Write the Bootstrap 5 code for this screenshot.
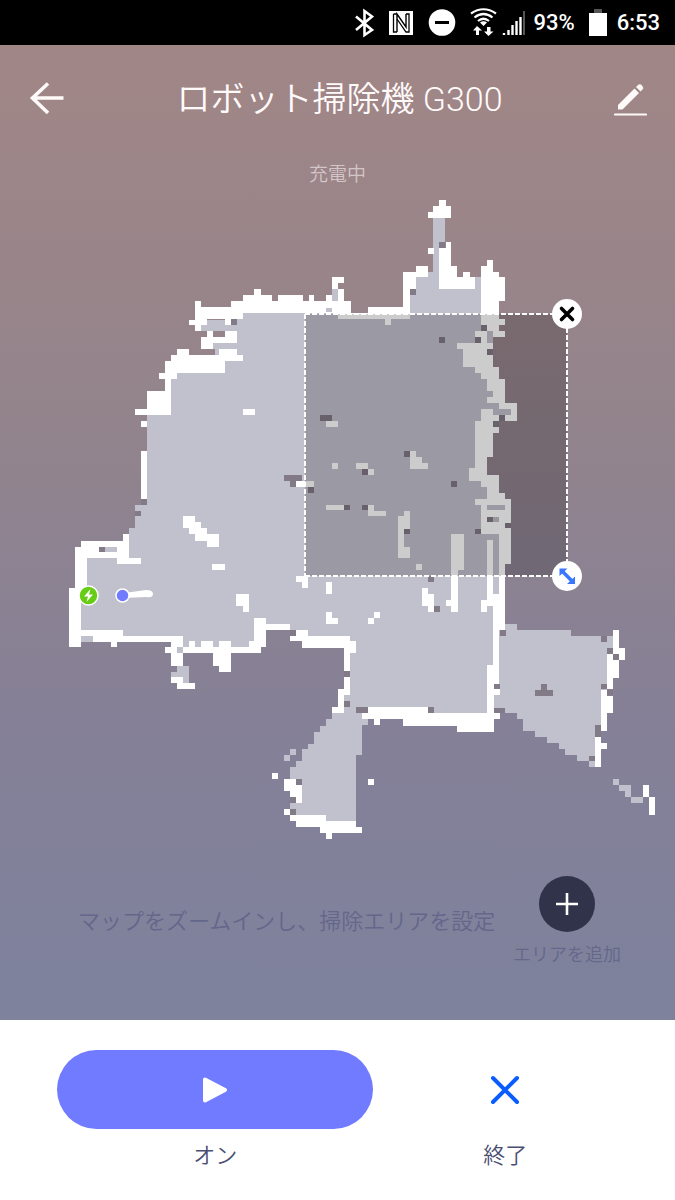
<!DOCTYPE html>
<html lang="ja">
<head>
<meta charset="utf-8">
<meta name="viewport" content="width=device-width, initial-scale=1">
<title>ロボット掃除機 G300</title>
<link href="https://cdn.jsdelivr.net/npm/bootstrap@5.3.0/dist/css/bootstrap.min.css" rel="stylesheet">
<style>
body{font-family:Roboto,"Noto Sans CJK JP",sans-serif;background:#fff;min-height:100vh}
svg{display:block;flex:none}
.statusbar{height:45px;padding-right:15px;background:#000;color:#fff;font-size:22px;font-weight:500;line-height:24px}
.statusbar .level{margin:0 14px 0 8px}
.statusbar .clock{margin-left:10px}
.screen{background:linear-gradient(#a18686,#93848c 38%,#848098 72%,#7e829d)}
.topbar{height:108px;padding:0 28px}
.topbar h1{font-size:34px;line-height:48px;color:#fffafa;font-weight:350}
.icon-btn{border:0;background:none;padding:0;color:#fffafa}
.state{font-size:19px;line-height:28px;padding:8px 0 6px;color:#d3c5c8;font-weight:350}
.floor{fill:#c1c0cd}
.wall{fill:#fff}
.gap{fill:#827a86}
.handle{position:absolute;width:30px;height:30px;border:0;border-radius:50%;background:#fff;padding:0;transform:translate(-50%,-50%)}
.handle-close{left:84%;top:18.4%}
.handle-size{left:84%;top:59.1%}
.tools{padding:36px 54px 53px 78px}
.hint{font-size:22px;line-height:28px;color:#64668a;font-weight:350}
.add{font-size:18px;line-height:24px;color:#64668a;font-weight:350;gap:11px;border:0;background:none;padding:0}
.add-disc{width:56px;height:56px;border-radius:50%;background:#303349}
.actions{padding:30px 38px 30px 57px;color:#494e72;font-size:22px;line-height:28px;font-weight:350}
.play-cell{flex:6 1 0}
.end-cell{flex:5 1 0}
.play,.end{height:79px;border:0;padding:0}
.play{border-radius:40px;background:#707bff}
.end{background:none}
.actions label{margin-top:13px}
</style>
</head>
<body class="d-flex flex-column">
<div class="statusbar d-flex align-items-center justify-content-end">
  <svg width="170" height="45" viewBox="356 0 170 45" role="img" aria-label="Bluetooth, NFC, Wi-Fi">
    <path d="M357 16.500L373 30L365.500 35V11L373 16.500L357 30" fill="none" stroke="#fff" stroke-width="2.600"/>
    <rect x="390" y="11" width="24" height="24" fill="#fff"/>
    <path d="M398 32V14L407 27V14" fill="none" stroke="#000" stroke-width="1.400"/>
    <path d="M394.500 14V32H398M394.500 14H398M407 14H410V32H407L398 19" fill="none" stroke="#000" stroke-width="1.300"/>
    <circle cx="443" cy="22.500" r="13.300" fill="#fff"/><path d="M436 22.500h14" stroke="#000" stroke-width="3"/>
    <g fill="none" stroke="#fff" stroke-width="2.200"><path d="M472 13.500Q484.500 5 497 13.500M475.500 17.500Q484.500 10.500 493.500 17.500M479 21Q484.500 16.500 490 21"/></g>
    <path d="M481 22.500Q484.500 20 488 22.500L484.500 26ZM478 26L483 30.500H480V35H477V30.500H474ZM489.500 36L494.500 31.500H491.500V27H488V31.500H485Z" fill="#fff"/>
    <path d="M505 35v-2M509.500 35v-5M513.500 35v-10M517.500 35v-14M521.500 35v-18" stroke="#fff" stroke-width="2.400"/><path d="M525 35V11" stroke="#555" stroke-width="2"/>
  </svg>
  <span class="level">93%</span>
  <svg width="18" height="27" viewBox="0 0 18 27" role="img" aria-label="battery"><path d="M5 0h8v4h-8z" fill="#555"/><path d="M0 4h18v23H0z" fill="#fff"/></svg>
  <span class="clock">6:53</span>
</div>

<main class="screen">
  <header class="topbar d-flex align-items-center justify-content-between">
    <button class="icon-btn" type="button" aria-label="戻る"><svg width="38" height="38" viewBox="0 0 38 38"><path d="M20 3.500L4.500 18L20 33M4.500 18H35.500" fill="none" stroke="currentColor" stroke-width="3.600"/></svg></button>
    <h1 class="m-0">ロボット掃除機 G300</h1>
    <button class="icon-btn" type="button" aria-label="編集"><svg width="34" height="34" viewBox="0 0 34 34"><path d="M2 32.500H33" stroke="currentColor" stroke-width="2.200" stroke-linecap="round"/><path d="M5 27.500V23L21.500 6.500L26 11L9.500 27.500ZM23 5L25 3Q27 1.500 29 3.500T29.500 7.500L27.500 9.500Z" fill="currentColor"/></svg></button>
  </header>
  <div class="state text-center">充電中</div>

  <div class="position-relative">
    <svg class="w-100 h-auto" viewBox="0 195 675 645" role="img" aria-label="間取りマップ">
      <g shape-rendering="crispEdges">
        <!-- rooms -->
        <g class="floor">
          <path d="M237 313H410V277H427V272H433V218H445V277H481V331H493V403H499V409H493V440H487V475H497V500H499V713H350V642H302V636H290V627H258V647H180V640H78V555H126V534H129V528H135V505H147V413H169V373H215V343H237Z"/>
          <path transform="translate(130 260) scale(.33333)" d="M213 196H320V213H213ZM231 180H284V196H231ZM248 250H320V268H248Z"/>
          <path transform="translate(60 440) scale(.33333)" d="M351 677H386V730H368V712H333V695H351Z"/>
          <path transform="translate(290 380) scale(.33333)" d="M592 70H628V88H664V104H610V88H592Z"/>
          <path transform="translate(250 600) scale(.33333)" d="M300 286H318V322H336V358H354V376H336V466H318V663H138V645H120V502H138V484H157V448H175V432H193V395H211V377H229V358H247V340H282V286ZM120 448h18v18h-18zM103 466h18v18h-18z"/>
          <path transform="translate(460 560) scale(.33333)" d="M118 192H171V210H333V228H458V264H441V496H405V620H387V604H351V586H315V568H298V550H262V532H226V514H190V478H171V460H136V444H100V210H118ZM458 658h18v17h-18zM476 675H512V711H495V693H476ZM512 712h36v17h-36z"/>
        </g>
        <!-- walls and obstacles -->
        <g class="wall">
          <path transform="translate(130 260) scale(.33333)" d="M195 124H213V142H302V124H338V106H373V88H392V106H427V124H445V106H518V124H536V106H553V124H589V106H607V52H642V70H625V88H642V124H662V160H338V178H302V196H284V178H231V196H213V213H195V196H177V180H195ZM231 213H248V231H284V213H320V250H248V268H213V231H231ZM142 268H177V286H266V268H320V286H338V304H284V340H142V357H124V464H16V448H52V393H106V357H88V340H106V304H124V286H142ZM34 482h18v18h-18zM338 448h36v17h-36z"/>
          <path transform="translate(380 190) scale(.33333)" d="M-36 352H70V247H107V227H143V262H107V298H90V388H-126V370H-36ZM16 388h18v18h-18zM178 30H197V48H214V84H143V66H160V48H178ZM143 174h18v17h-18zM197 156H214V227H232V262H250V245H270V262H286V298H178V174H197ZM322 209H340V245H358V262H376V334H358V388H376V406H358V424H376V442H340V424H322V406H304V227H322ZM286 424H322V460H340V478H322V496H340V532H358V568H376V640H322V568H304V550H286V532H250V478H232V460H304V442H286Z"/>
          <path transform="translate(290 380) scale(.33333)" d="M628 70H682V123H646V104H664V88H628ZM574 88H610V106H628V123H610V141H628V159H610V231H592V285H628V338H646V356H664V552H646V750H628V912H610V678H592V696H574V660H592V480H610V642H628V463H574V374H556V356H592V320H574V302H538V265H556V123H574ZM108 123h36v18h-36zM126 248h18v18h-18zM199 248h35v18h18v18h-18v-18h-35zM359 213H377V231H395V248H413V266H359ZM18 302h54v18h-54zM108 374h54v17h-54zM234 374H252V392H287V409H234ZM341 392H359V446H341V500H359V535H323V409H341ZM378 553h18v18h-18zM484 463H521V571H503V696H484V678H467V660H484ZM18 588H54V624H36V606H18ZM108 606h18v36h-18zM395 624H413V642H431V696H413V678H395ZM108 696H126V714H144V732H108ZM252 696h18v18h-18v18h-18v-18h18z"/>
          <path transform="translate(60 440) scale(.33333)" d="M243 32h18v144h-18zM368 229H405V247H422V265H440V283H477V320H440V302H405V283H387V265H368ZM457 372h37v19h-37zM529 463H566V516H548V499H529ZM190 283H207V355H243V373H172V355H82V445H64V570H190V588H368V622H386V604H405V622H422V604H459V622H477V604H512V622H566V604H583V534H618V552H690V570H618V622H602V640H512V695H477V677H459V640H368V677H333V640H316V622H333V605H172V622H154V605H100V588H64V622H28V445H46V320H64V302H190ZM333 712H368V730H405V748H351V730H333Z"/>
          <path transform="translate(250 600) scale(.33333)" d="M138 90H174V108H300V124H318V160H300V214H282V143H157V124H120V108H138ZM282 232H300V286H282V340H247V322H264V268H282ZM354 322H533V340H712V196H731V268H749V286H731V340H749V358H731V395H622V377H460V358H390V376H372V358H336V340H354ZM354 538h18v18h-18zM66 520h19v18h-19zM103 538H138V556H157V608H138V592H120V574H103ZM103 628h17v17h-17zM120 645H229V663H318V681H336V698H247V716H229V698H211V681H138V663H120Z"/>
          <path transform="translate(460 560) scale(.33333)" d="M458 210H476V264H494V299H476V354H458V388H441V282H458ZM423 390H441V407H458V460H441V514H423ZM405 532H423V550H441V568H423V621H405ZM548 675h18v36h-18zM566 711h18v54h-18z"/>
        </g>
        <!-- floor seen through the walls -->
        <g class="floor">
          <path transform="translate(130 260) scale(.33333)" d="M607 88h18v36h-18zM589 143h18v13h-18z"/>
          <path transform="translate(380 190) scale(.33333)" d="M322 604h18v18h-18z"/>
          <path transform="translate(290 380) scale(.33333)" d="M592 374h54v17h-54z"/>
          <path transform="translate(60 440) scale(.33333)" d="M351 622h17v18h-17zM64 588h36v17h-36zM136 320h36v16h-36z"/>
        </g>
        <!-- unexplored cells -->
        <g class="gap">
          <path transform="translate(130 260) scale(.33333)" d="M302 178h18v18h-18z"/>
          <path transform="translate(380 190) scale(.33333)" d="M178 442h18v18h-18zM304 406h18v18h-18zM286 442h18v18h-18zM322 478h18v18h-18zM90 298h18v18h-18zM178 156h18v18h-18z"/>
          <path transform="translate(290 380) scale(.33333)" d="M90 104h36v19h-36zM610 123h18v18h-18zM628 106h18v17h-18zM592 410h18v17h-18zM646 428h18v17h-18zM556 446h18v17h-18zM216 266h18v18h-18zM341 213h18v18h-18zM484 302h18v18h-18zM54 320h18v18h-18zM162 374h18v17h-18zM216 374h18v17h-18zM341 446h18v17h-18zM413 588h18v18h-18zM431 678h18v18h-18zM0 750h18v18h-18z"/>
          <path transform="translate(290 380) scale(.33333)" opacity=".5" d="M610 410h18v17h-18z"/>
          <path transform="translate(60 440) scale(.33333)" d="M243 176h18v18h-18zM225 212h18v17h-18zM673 104h54v18h-54zM691 122h18v18h-18zM118 320h18v16h-18z"/>
          <path transform="translate(250 600) scale(.33333)" d="M282 214h18v18h-18zM282 304h18v18h-18zM318 322h36v18h-36zM533 322h18v18h-18zM731 252h18v16h-18zM749 90h18v18h-18zM731 324h35v16h-35zM138 538h18v18h-18zM120 592h18v16h-18zM120 628h18v17h-18z"/>
          <path transform="translate(460 560) scale(.33333)" d="M423 228h18v17h-18zM441 264h18v17h-18zM459 282h17v17h-17zM423 372h18v16h-18zM441 390h18v16h-18zM405 496h18v36h-18zM387 588h18v16h-18zM243 372H262V389H279V407H226V389H243Z"/>
        </g>
      </g>
      <!-- selected cleaning area -->
      <rect x="305" y="314" width="262" height="262" fill="#000" fill-opacity=".2"/>
      <path d="M305 314H567M305 576H567M305 314V576M567 314V576" fill="none" stroke="#fff" stroke-width="2" stroke-dasharray="5 2"/>
      <!-- dock and robot -->
      <path d="M124 593L146 590Q153 590 153 594T146 597L124 598Z" fill="#fff"/>
      <circle cx="88.500" cy="595.500" r="9.500" fill="#66cc14" stroke="#fff" stroke-width="1.500"/>
      <path d="M90.500 589L84 596.500H88L86.500 602L93 594.500H89Z" fill="#fff"/>
      <circle cx="122.500" cy="595.500" r="6.500" fill="#707bff" stroke="#fff" stroke-width="1.500"/>
    </svg>
    <button class="handle handle-close" type="button" aria-label="エリアを削除"><svg width="30" height="30" viewBox="0 0 30 30"><path d="M9.500 9.500l11 11M20.500 9.500l-11 11" stroke="#000" stroke-width="3.600" stroke-linecap="round"/></svg></button>
    <button class="handle handle-size" type="button" aria-label="サイズ変更"><svg width="30" height="30" viewBox="0 0 30 30"><path d="M10 10l11 11" stroke="#3b76ff" stroke-width="3.600"/><path d="M7.500 7.500H15.500L7.500 15ZM23 23H15L23 15.500Z" fill="#3b76ff"/></svg></button>
  </div>

  <div class="tools d-flex align-items-center justify-content-between">
    <div class="hint">マップをズームインし、掃除エリアを設定</div>
    <button class="add d-flex flex-column align-items-center" type="button">
      <span class="add-disc d-flex align-items-center justify-content-center"><svg width="24" height="24" viewBox="0 0 24 24"><path d="M12 1V23M1 12H23" stroke="#fff" stroke-width="2.600"/></svg></span>
      <span>エリアを追加</span>
    </button>
  </div>
</main>

<footer class="actions d-flex">
  <div class="play-cell d-flex flex-column text-center">
    <button class="play d-flex align-items-center justify-content-center" id="play" type="button"><svg width="26" height="28" viewBox="0 0 26 28"><path d="M3 3.500V24.500L23 14Z" fill="#fff" stroke="#fff" stroke-width="4" stroke-linejoin="round"/></svg></button>
    <label for="play">オン</label>
  </div>
  <div class="end-cell d-flex flex-column text-center">
    <button class="end d-flex align-items-center justify-content-center" id="end" type="button"><svg width="30" height="30" viewBox="0 0 30 30"><path d="M3 3L27 27M27 3L3 27" stroke="#0a5cff" stroke-width="4" stroke-linecap="round"/></svg></button>
    <label for="end">終了</label>
  </div>
</footer>
<script src="https://cdn.jsdelivr.net/npm/bootstrap@5.3.0/dist/js/bootstrap.bundle.min.js"></script>
</body>
</html>
